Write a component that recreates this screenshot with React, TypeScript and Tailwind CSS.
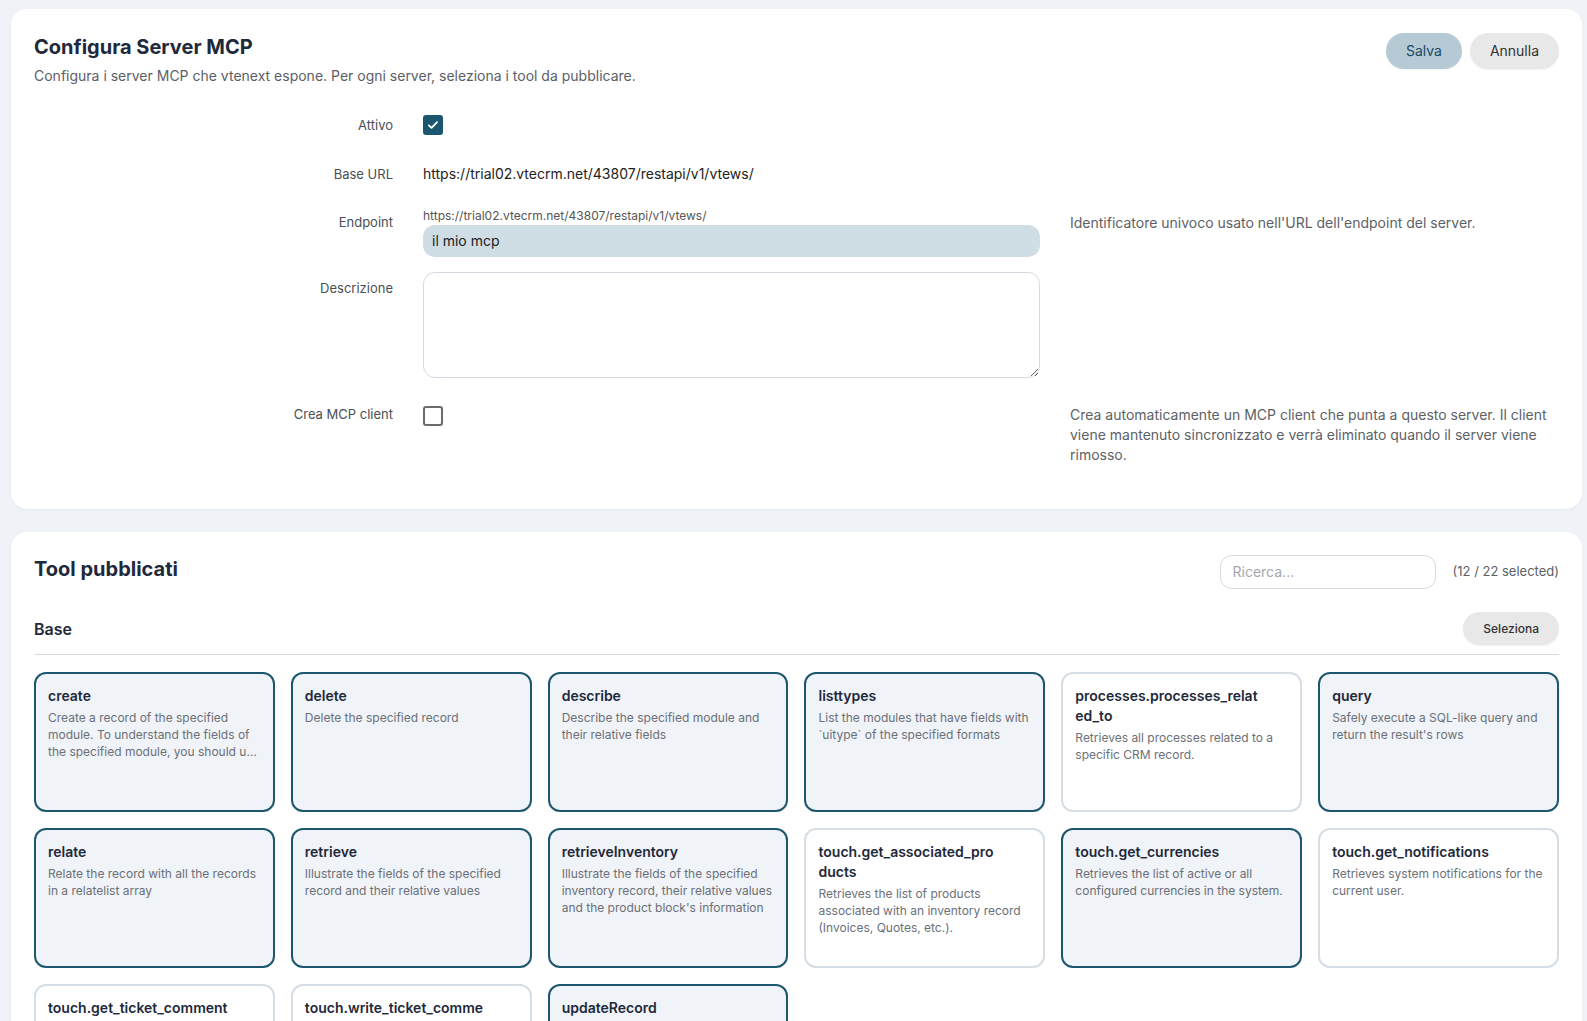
import React from "react";

type Tool = { name: string; desc: string; on: boolean };

const tools: Tool[] = [
  { name: "create", desc: "Create a record of the specified module. To understand the fields of the specified module, you should use the describe tool first.", on: true },
  { name: "delete", desc: "Delete the specified record", on: true },
  { name: "describe", desc: "Describe the specified module and their relative fields", on: true },
  { name: "listtypes", desc: "List the modules that have fields with `uitype` of the specified formats", on: true },
  { name: "processes.processes_related_to", desc: "Retrieves all processes related to a specific CRM record.", on: false },
  { name: "query", desc: "Safely execute a SQL-like query and return the result's rows", on: true },
  { name: "relate", desc: "Relate the record with all the records in a relatelist array", on: true },
  { name: "retrieve", desc: "Illustrate the fields of the specified record and their relative values", on: true },
  { name: "retrieveInventory", desc: "Illustrate the fields of the specified inventory record, their relative values and the product block's information", on: true },
  { name: "touch.get_associated_products", desc: "Retrieves the list of products associated with an inventory record (Invoices, Quotes, etc.).", on: false },
  { name: "touch.get_currencies", desc: "Retrieves the list of active or all configured currencies in the system.", on: true },
  { name: "touch.get_notifications", desc: "Retrieves system notifications for the current user.", on: false },
  { name: "touch.get_ticket_comments", desc: "Retrieves the comments of the specified ticket.", on: false },
  { name: "touch.write_ticket_comment", desc: "Writes a new comment on the specified ticket.", on: false },
  { name: "updateRecord", desc: "Update the specified record with the given values", on: true },
];

function Label({ children, className = "" }: { children: React.ReactNode; className?: string }) {
  return <div className={`text-right text-[13px] leading-5 text-[#4a4f55] ${className}`}>{children}</div>;
}

export default function App() {
  return (
    <div className="h-[1021px] overflow-hidden bg-[#eff2f7] pl-[11px] pr-[5px] pt-[9px] [font-family:Inter,'Noto_Sans',sans-serif] text-[#1e293b]">
      {/* Card 1 */}
      <div className="rounded-2xl bg-white px-[23px] pt-6 pb-[44px] shadow-[0_1px_2px_rgba(0,0,0,0.05)]">
        <div className="flex items-start justify-between">
          <div>
            <h1 className="text-xl font-bold leading-7 text-[#1e293b]">Configura Server MCP</h1>
            <p className="mt-[5px] text-sm leading-5 text-[#5b6068]">
              Configura i server MCP che vtenext espone. Per ogni server, seleziona i tool da pubblicare.
            </p>
          </div>
          <div className="flex gap-2">
            <button className="h-9 rounded-full bg-[#b5cad5] px-5 text-sm text-[#1b4b61] shadow-[0_1px_2px_rgba(0,0,0,0.06)]">Salva</button>
            <button className="h-9 rounded-full bg-[#e8e8e8] px-5 text-sm text-[#333] shadow-[0_1px_2px_rgba(0,0,0,0.06)]">Annulla</button>
          </div>
        </div>

        <div className="mt-[28px] flex flex-col">
          {/* Attivo */}
          <div className="grid grid-cols-[359px_617px_1fr] items-center gap-x-[30px]">
            <Label>Attivo</Label>
            <div className="flex h-[22px] items-center">
              <span className="flex h-5 w-5 items-center justify-center rounded-[3px] bg-[#1b5670]">
                <svg width="14" height="14" viewBox="0 0 24 24" fill="none" stroke="white" strokeWidth="3" strokeLinecap="round" strokeLinejoin="round">
                  <path d="M5 12.5l4.5 4.5L19 7" />
                </svg>
              </span>
            </div>
            <div />
          </div>

          {/* Base URL */}
          <div className="mt-[28px] grid grid-cols-[359px_617px_1fr] items-center gap-x-[30px]">
            <Label>Base URL</Label>
            <div className="text-sm leading-5 text-[#222]">https://trial02.vtecrm.net/43807/restapi/v1/vtews/</div>
            <div />
          </div>

          {/* Endpoint */}
          <div className="mt-[24px] grid grid-cols-[359px_617px_1fr] items-start gap-x-[30px]">
            <Label className="pt-[4px]">Endpoint</Label>
            <div className="flex flex-col">
              <div className="text-[12px] leading-4 text-[#555]">https://trial02.vtecrm.net/43807/restapi/v1/vtews/</div>
              <div className="mt-[1px] flex h-[32px] items-center rounded-xl bg-[#cfdde5] px-[9px] text-sm text-[#222]">il mio mcp</div>
            </div>
            <div className="pt-[5px] text-sm leading-5 text-[#5d6167]">Identificatore univoco usato nell'URL dell'endpoint del server.</div>
          </div>

          {/* Descrizione */}
          <div className="mt-[15px] grid grid-cols-[359px_617px_1fr] items-start gap-x-[30px]">
            <Label className="pt-[6px]">Descrizione</Label>
            <textarea className="h-[106px] w-full rounded-xl border border-[#d3dae1] bg-white px-3 py-2 text-sm outline-none" />
            <div />
          </div>

          {/* Crea MCP client */}
          <div className="mt-[26px] grid grid-cols-[359px_617px_1fr] items-start gap-x-[30px]">
            <Label>Crea MCP client</Label>
            <div className="pt-[2px]">
              <span className="block h-5 w-5 rounded-[3px] border-2 border-[#6b6b6b] bg-white" />
            </div>
            <div className="pt-[1px] text-sm leading-5 text-[#5d6167]">
              Crea automaticamente un MCP client che punta a questo server. Il client viene mantenuto sincronizzato e verrà eliminato quando il server viene rimosso.
            </div>
          </div>
        </div>
      </div>

      {/* Card 2 */}
      <div className="mt-[23px] rounded-2xl bg-white px-[23px] pt-[23px] pb-8 shadow-[0_1px_2px_rgba(0,0,0,0.05)]">
        <div className="flex items-start justify-between">
          <h2 className="text-xl font-bold leading-7 text-[#1e293b]">Tool pubblicati</h2>
          <div className="flex items-center gap-[17px]">
            <div className="flex h-[34px] w-[216px] items-center rounded-xl border border-[#d3dae1] px-3 text-sm text-[#a3a8ae]">Ricerca...</div>
            <span className="text-[13px] text-[#5d6167]">(12 / 22 selected)</span>
          </div>
        </div>

        <div className="mt-[23px] flex items-center justify-between border-b border-[#d3dbe3] pb-[9px]">
          <h3 className="text-base font-semibold leading-6 text-[#1e293b]">Base</h3>
          <button className="h-[33px] rounded-full bg-[#e8e8e8] px-5 text-xs font-medium text-[#333] shadow-[0_1px_2px_rgba(0,0,0,0.06)]">Seleziona</button>
        </div>

        <div className="mt-[17px] grid grid-cols-6 gap-4">
          {tools.map((t) => (
            <div
              key={t.name}
              className={`h-[140px] rounded-xl border-2 p-3 ${t.on ? "border-[#1d566f] bg-[#f0f3f7]" : "border-[#d5dde5] bg-white"}`}
            >
              <div className="pr-[30px] text-sm font-semibold leading-5 break-all text-[#1e293b]">{t.name}</div>
              <div className="mt-[3px] line-clamp-3 text-[12px] leading-[17px] text-[#6b7079]">{t.desc}</div>
            </div>
          ))}
        </div>
      </div>
    </div>
  );
}
